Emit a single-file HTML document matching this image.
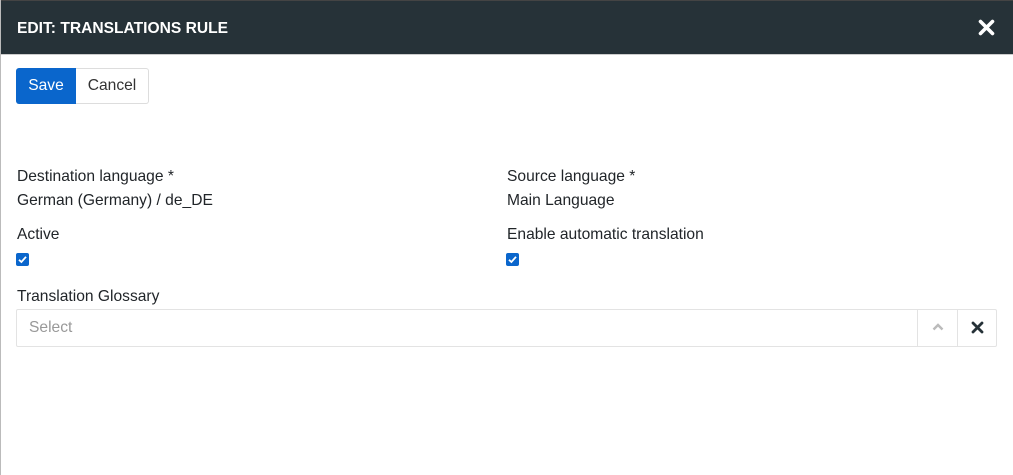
<!DOCTYPE html>
<html><head><style>
*{box-sizing:border-box;margin:0;padding:0}
body{width:1013px;height:475px;background:#fff;font-family:"Liberation Sans",sans-serif;color:#212529;position:relative;overflow:hidden}
.bl{position:absolute;left:0;top:0;width:1px;height:475px;background:#bbb}
.hdr{position:absolute;left:0;top:0;width:1013px;height:55px;background:#263238;border-top:1px solid #444;border-bottom:1px solid #ccc}
.hdr .t{position:absolute;left:17px;top:19px;color:#fff;font-weight:bold;font-size:15.6px}
.x{position:absolute;left:978px;top:18px}
.btns{position:absolute;left:16px;top:68px;display:flex;height:36px}
.b1{background:#0a66cc;color:#fff;font-size:15.6px;line-height:36px;border-radius:3px 0 0 3px;width:60px;text-align:center}
.b2{border:1px solid #ddd;border-left:none;color:#333;font-size:15.6px;line-height:34px;width:73px;text-align:center;border-radius:0 3px 3px 0}
.l{position:absolute;font-size:15.6px;color:#212529}
.cb{position:absolute;width:13px;height:13px;background:#0a66cc;border-radius:2px}
.cb svg{position:absolute;left:2px;top:2px}
.sel{position:absolute;left:16px;top:309px;width:981px;height:38px;border:1px solid #e3e3e3;border-radius:2px}
.sel .p{position:absolute;left:12px;top:9px;color:#999;font-size:15.6px}
.d1{position:absolute;left:900px;top:0;width:40px;height:36px;border-left:1px solid #e3e3e3}
.d2{position:absolute;left:940px;top:0;width:40px;height:36px;border-left:1px solid #e3e3e3}
</style></head><body>
<div class="hdr"><div class="t">EDIT: TRANSLATIONS RULE</div>
<svg class="x" width="17" height="17" viewBox="0 0 17 17"><path d="M2.5 2.5L14.5 14.5M14.5 2.5L2.5 14.5" stroke="#fff" stroke-width="3.6" stroke-linecap="round"/></svg></div>
<div class="bl"></div>
<div class="btns"><div class="b1">Save</div><div class="b2">Cancel</div></div>
<div class="l" style="left:17px;top:168px">Destination language *</div>
<div class="l" style="left:17px;top:192px">German (Germany) / de_DE</div>
<div class="l" style="left:507px;top:168px">Source language *</div>
<div class="l" style="left:507px;top:192px">Main Language</div>
<div class="l" style="left:17px;top:226px">Active</div>
<div class="l" style="left:507px;top:226px">Enable automatic translation</div>
<div class="cb" style="left:16px;top:253px"><svg width="9" height="9" viewBox="0 0 9 9"><path d="M1 4.8L3.4 7L8 1.8" stroke="#fff" stroke-width="1.8" fill="none"/></svg></div>
<div class="cb" style="left:506px;top:253px"><svg width="9" height="9" viewBox="0 0 9 9"><path d="M1 4.8L3.4 7L8 1.8" stroke="#fff" stroke-width="1.8" fill="none"/></svg></div>
<div class="l" style="left:17px;top:288px">Translation Glossary</div>
<div class="sel"><div class="p">Select</div>
<div class="d1"><svg style="position:absolute;left:14px;top:13px" width="12" height="8" viewBox="0 0 12 8"><path d="M1.5 6.5L6 2L10.5 6.5" stroke="#bbb" stroke-width="2.4" fill="none"/></svg></div>
<div class="d2"><svg style="position:absolute;left:13px;top:11px" width="13" height="13" viewBox="0 0 13 13"><path d="M2 2L11 11M11 2L2 11" stroke="#263238" stroke-width="2.8" stroke-linecap="round"/></svg></div>
</div>
</body></html>
